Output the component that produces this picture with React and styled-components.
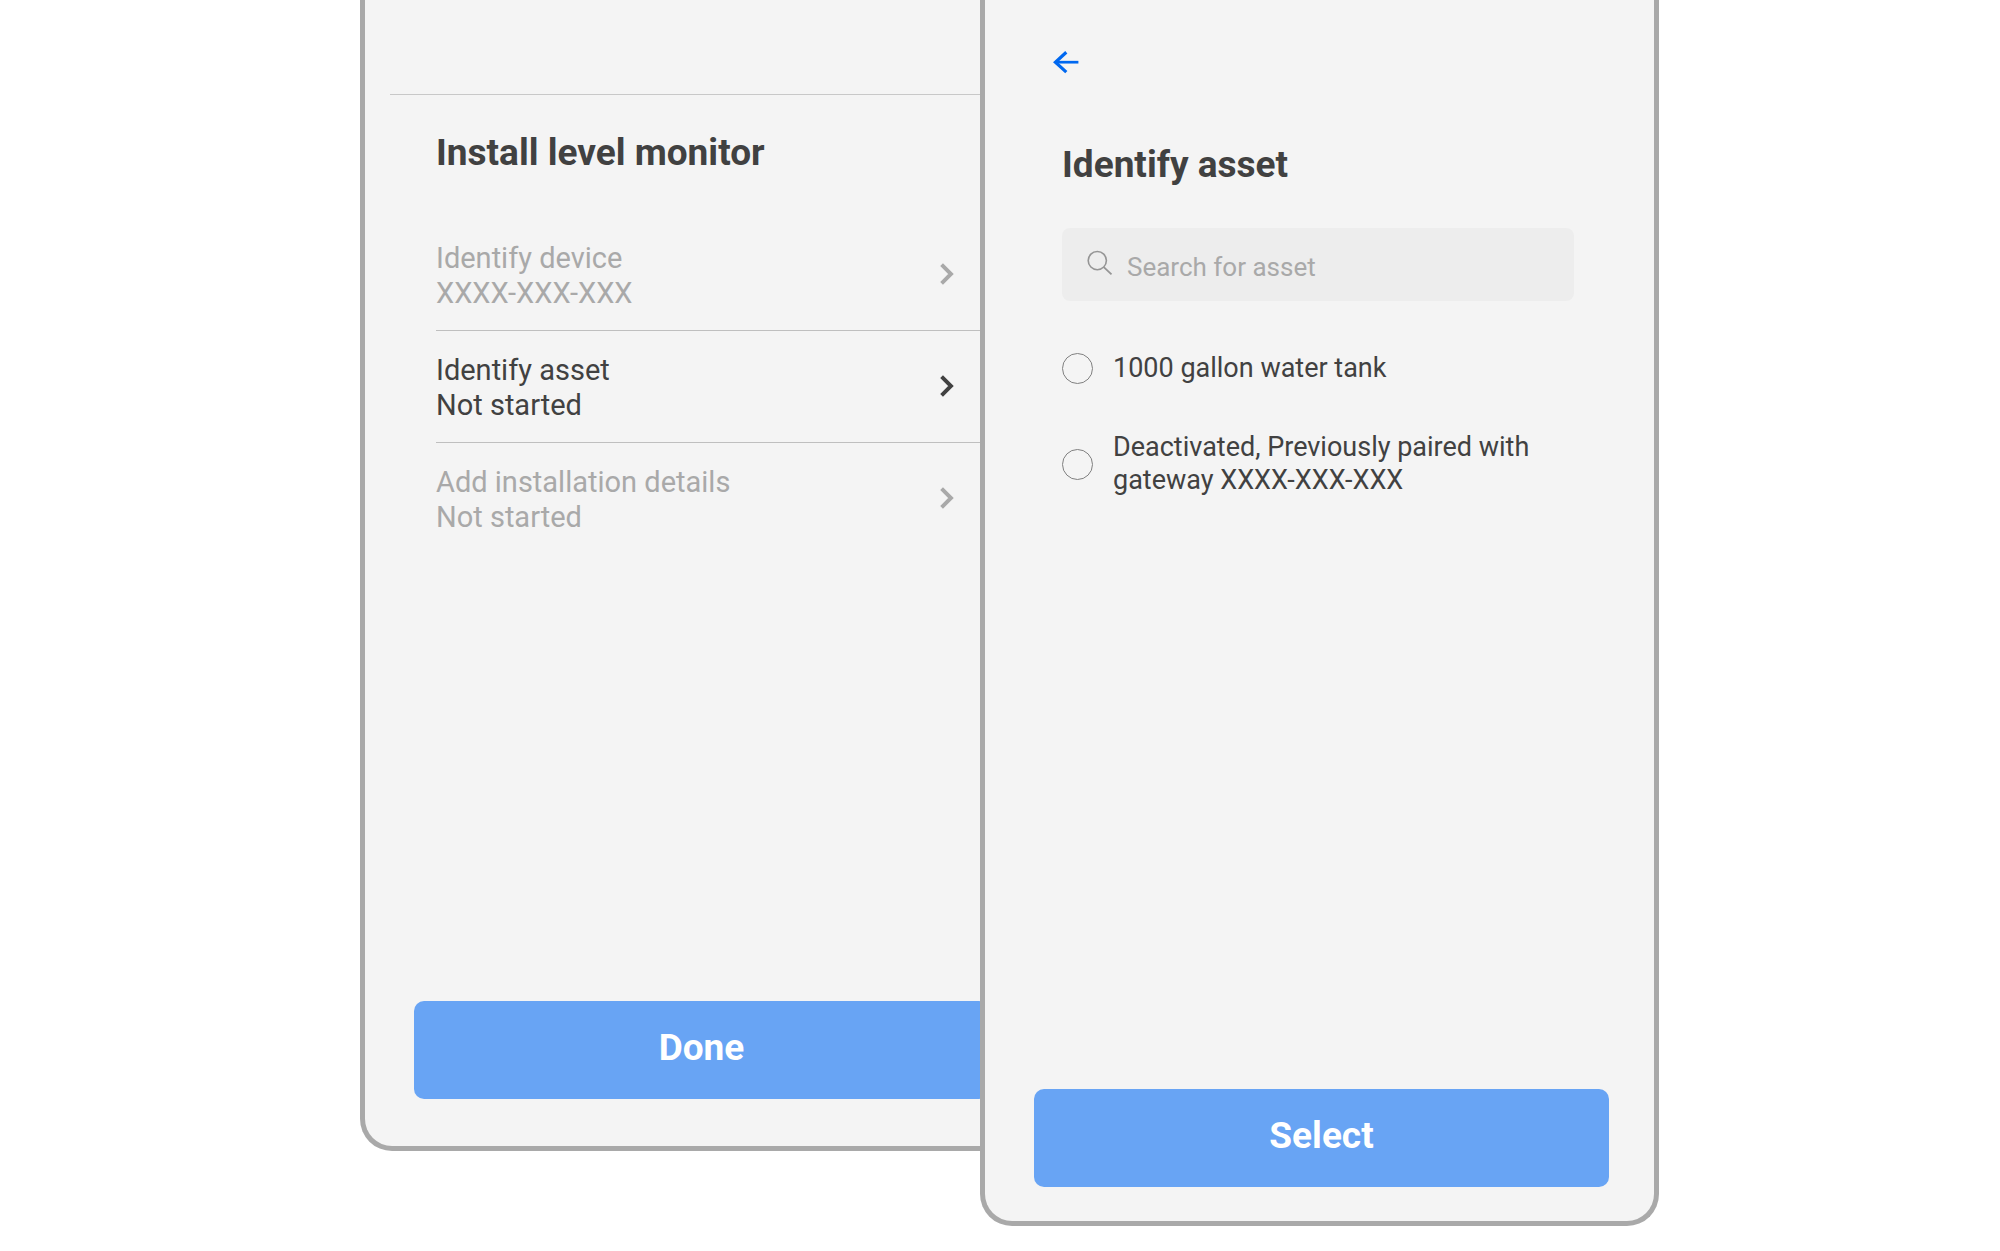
import React, { useState } from "react";
import styled, { createGlobalStyle } from "styled-components";

const ink = "#414141";
const muted = "#a9a9a9";

const GlobalStyle = createGlobalStyle`
  *, *::before, *::after { box-sizing: border-box; }
  body {
    margin: 0;
    background: #ffffff;
    color: ${ink};
    font-family: Roboto, "Liberation Sans", sans-serif;
  }
  button, input { font: inherit; color: inherit; }
`;

/* The two screens share the narrow middle column, where the second covers the first. */
const Stage = styled.main`
  display: grid;
  grid-template-columns:
    minmax(0, 360fr) minmax(0, 620fr) minmax(0, 59fr)
    minmax(0, 620fr) minmax(0, 341fr);
  min-height: 100vh;
`;

const Screen = styled.section`
  grid-row: 1;
  grid-column: ${(p) => (p.$front ? "3 / 5" : "2 / 4")};
  z-index: ${(p) => (p.$front ? 1 : 0)};
  margin-bottom: ${(p) => (p.$front ? 25 : 100)}px;
  display: flex;
  flex-direction: column;
  background: #f4f4f4;
  border: 5px solid ${muted};
  border-top: 0;
  border-radius: 0 0 32px 32px;
`;

const TopBar = styled.header`
  height: 95px;
  margin-left: 25px;
  border-bottom: 1px solid #c8c8c8;
`;

const NavBar = styled.nav`
  display: flex;
  padding: 50px 66px 0;
`;

const BackButton = styled.button`
  display: flex;
  padding: 0;
  border: 0;
  background: none;
  color: #0068f0;
  cursor: pointer;
`;

const Title = styled.h1`
  margin: 0;
  font-size: 37px;
  line-height: 44px;
  font-weight: 700;
`;

const Steps = styled.div`
  padding: 36px 0 0 71px;
`;

const StepList = styled.ul`
  list-style: none;
  margin: 44px 0 0;
  padding: 0;
`;

const StepItem = styled.li`
  & + & { border-top: 1px solid #bfbfbf; }
`;

const StepButton = styled.button`
  display: flex;
  align-items: center;
  justify-content: space-between;
  width: 100%;
  padding: 22px 80px 19px 0;
  border: 0;
  background: none;
  text-align: left;
  font-size: 29px;
  line-height: 35px;
  color: ${(p) => (p.$active ? ink : muted)};
  cursor: pointer;

  svg { flex: none; margin-bottom: 4px; }
`;

const StepText = styled.span`
  display: flex;
  flex-direction: column;
`;

const AssetForm = styled.form`
  flex: 1;
  display: flex;
  flex-direction: column;
`;

const AssetFields = styled.div`
  padding: 69px 80px 0 77px;
`;

const SearchBox = styled.label`
  display: flex;
  align-items: center;
  gap: 14px;
  height: 73px;
  margin-top: 41px;
  padding: 0 24px;
  border-radius: 8px;
  background: #ededed;

  svg { flex: none; margin-bottom: 4px; }
`;

const SearchInput = styled.input`
  flex: 1;
  min-width: 0;
  padding: 4px 0 0;
  border: 0;
  outline: 0;
  background: none;
  font-size: 26px;
  line-height: 32px;
  &::placeholder { color: ${muted}; opacity: 1; }
`;

const Options = styled.div`
  display: flex;
  flex-direction: column;
  gap: 46px;
  margin-top: 51px;
`;

const Option = styled.label`
  display: flex;
  align-items: center;
  gap: 20px;
  font-size: 27px;
  line-height: 33px;
  cursor: pointer;
`;

const Radio = styled.input`
  appearance: none;
  flex: none;
  width: 31px;
  height: 31px;
  margin: 0;
  border: 1px solid #808080;
  border-radius: 50%;
  &:checked { background: radial-gradient(#68a4f4 8px, transparent 9px); }
`;

const Footer = styled.footer`
  margin-top: auto;
  padding: 48px 45px ${(p) => p.$bottom}px 49px;
`;

const PrimaryButton = styled.button`
  display: block;
  width: 100%;
  height: 98px;
  padding: 0 0 4px;
  border: 0;
  border-radius: 10px;
  background: #68a4f4;
  color: #ffffff;
  font-size: 37px;
  line-height: 44px;
  font-weight: 700;
  cursor: pointer;
`;

const Chevron = () => (
  <svg width="15" height="24" viewBox="0 0 15 24" fill="none" stroke="currentColor" strokeWidth="3.9" aria-hidden="true">
    <path d="M2.6 2.6 12 12l-9.4 9.4" />
  </svg>
);

const BackArrow = () => (
  <svg width="28" height="24" viewBox="0 0 28 24" fill="none" stroke="currentColor" aria-hidden="true">
    <path d="M15.3 2.3 4.4 12.2l10.9 9.9" strokeWidth="3.2" />
    <path d="M4.4 12.2h23" strokeWidth="2.7" />
  </svg>
);

const SearchIcon = () => (
  <svg width="27" height="26" viewBox="0 0 27 26" fill="none" stroke="#959595" strokeWidth="1.6" aria-hidden="true">
    <circle cx="11.3" cy="10.6" r="9.1" />
    <path d="M17.8 17.1l7.7 7.3" strokeWidth="1.8" />
  </svg>
);

const steps = [
  { name: "Identify device", status: "XXXX-XXX-XXX" },
  { name: "Identify asset", status: "Not started", active: true },
  { name: "Add installation details", status: "Not started" },
];

const assets = [
  "1000 gallon water tank",
  "Deactivated, Previously paired with gateway XXXX-XXX-XXX",
];

export default function App() {
  const [query, setQuery] = useState("");
  const [chosen, setChosen] = useState(null);

  return (
    <>
      <GlobalStyle />
      <Stage>
        <Screen>
          <TopBar />
          <Steps>
            <Title>Install level monitor</Title>
            <StepList>
              {steps.map((step) => (
                <StepItem key={step.name}>
                  <StepButton type="button" $active={step.active}>
                    <StepText>
                      <span>{step.name}</span>
                      <span>{step.status}</span>
                    </StepText>
                    <Chevron />
                  </StepButton>
                </StepItem>
              ))}
            </StepList>
          </Steps>
          <Footer $bottom={47}>
            <PrimaryButton type="button">Done</PrimaryButton>
          </Footer>
        </Screen>

        <Screen $front>
          <NavBar>
            <BackButton type="button" aria-label="Back">
              <BackArrow />
            </BackButton>
          </NavBar>
          <AssetForm onSubmit={(e) => e.preventDefault()}>
            <AssetFields>
              <Title>Identify asset</Title>
              <SearchBox>
                <SearchIcon />
                <SearchInput
                  type="search"
                  aria-label="Search for asset"
                  placeholder="Search for asset"
                  value={query}
                  onChange={(e) => setQuery(e.target.value)}
                />
              </SearchBox>
              <Options>
                {assets.map((asset) => (
                  <Option key={asset}>
                    <Radio
                      type="radio"
                      name="asset"
                      checked={chosen === asset}
                      onChange={() => setChosen(asset)}
                    />
                    <span>{asset}</span>
                  </Option>
                ))}
              </Options>
            </AssetFields>
            <Footer $bottom={34}>
              <PrimaryButton type="submit">Select</PrimaryButton>
            </Footer>
          </AssetForm>
        </Screen>
      </Stage>
    </>
  );
}
